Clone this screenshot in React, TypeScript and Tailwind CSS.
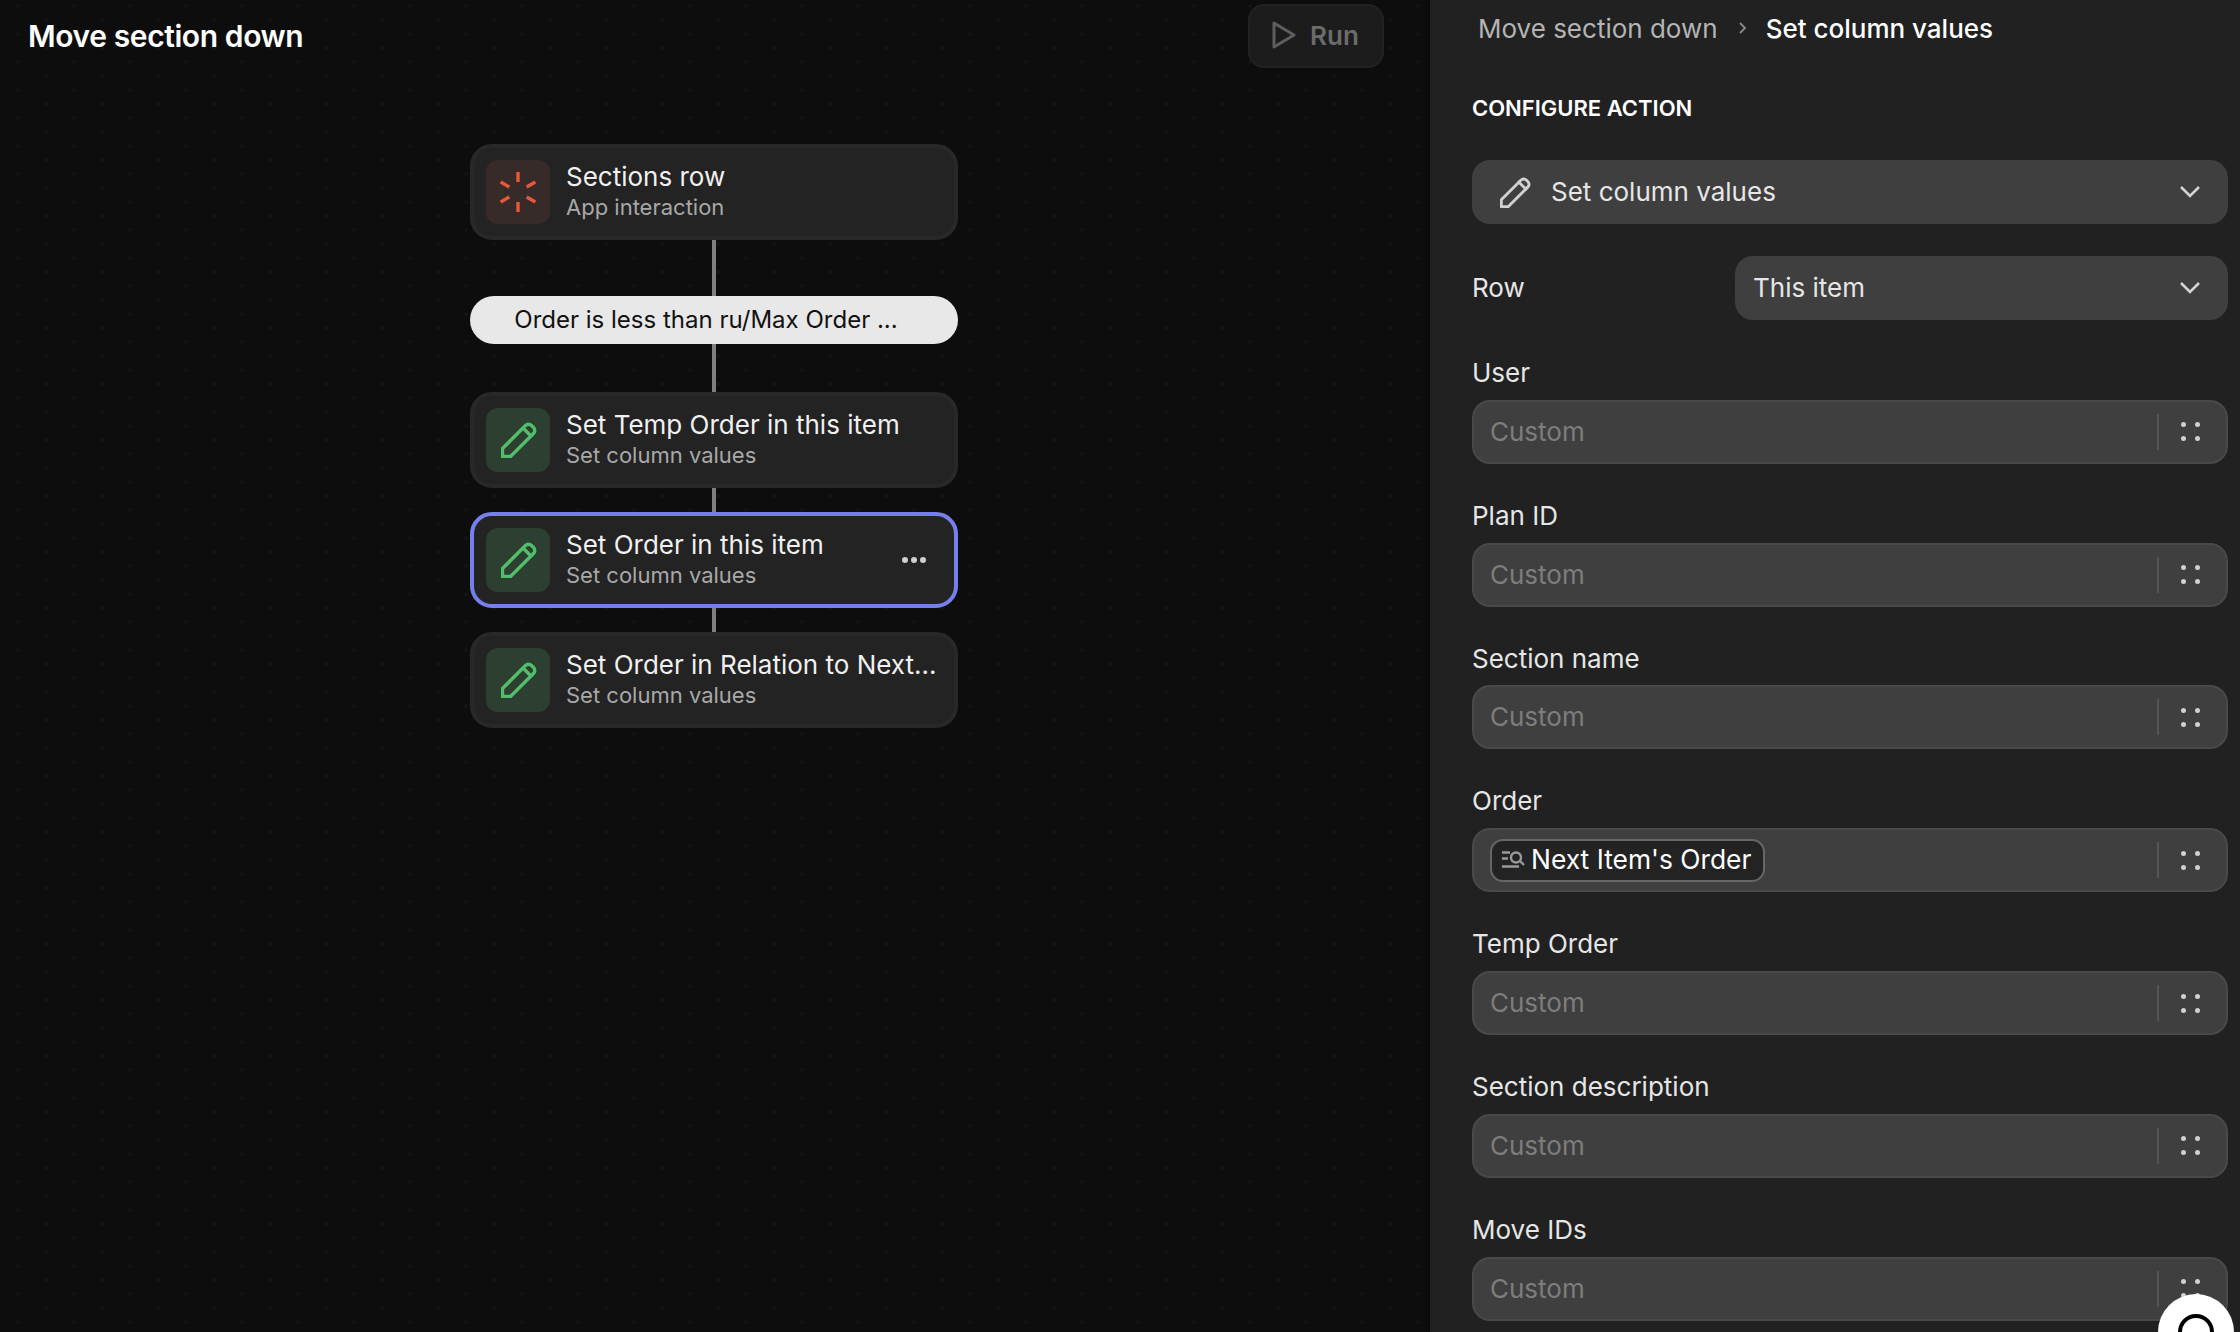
const fields = ['User', 'Plan ID', 'Section name', 'Order', 'Temp Order', 'Section description', 'Move IDs'];

function PencilIcon({ className }: { className?: string }) {
  return (
    <svg viewBox="0 0 36 36" fill="none" stroke="currentColor" strokeWidth="3.4" strokeLinejoin="round" strokeLinecap="round" className={className}>
      <path d="M1.5 34.5V26.5L24.5 3.5a4.2 4.2 0 0 1 6 0l2 2a4.2 4.2 0 0 1 0 6L9.5 34.5Z" />
      <path d="M22 6l8 8" />
    </svg>
  );
}

function SpinnerIcon() {
  return (
    <svg viewBox="0 0 64 64" className="w-16 h-16" stroke="#e8593a" strokeWidth="3.4">
      {[0, 60, 120, 180, 240, 300].map((a) => (
        <line key={a} x1="32" y1="12" x2="32" y2="22" transform={`rotate(${a} 32 32)`} />
      ))}
    </svg>
  );
}

function ChevronIcon() {
  return (
    <svg viewBox="0 0 20 12" fill="none" stroke="#d4d4d4" strokeWidth="2.6" className="w-5 h-3">
      <path d="M1 1l9 9 9-9" />
    </svg>
  );
}

function DotsGrid() {
  return (
    <div className="grid grid-cols-2 gap-x-[9px] gap-y-[9px]">
      <span className="w-[5px] h-[5px] rounded-full bg-[#d0d0d0]" />
      <span className="w-[5px] h-[5px] rounded-full bg-[#d0d0d0]" />
      <span className="w-[5px] h-[5px] rounded-full bg-[#d0d0d0]" />
      <span className="w-[5px] h-[5px] rounded-full bg-[#d0d0d0]" />
    </div>
  );
}

function Connector({ height }: { height: string }) {
  return <div className={`w-1 bg-[#808080] ml-[242px] ${height}`} />;
}

interface StepProps {
  title: string;
  subtitle: string;
  selected?: boolean;
  trigger?: boolean;
}

function Step({ title, subtitle, selected, trigger }: StepProps) {
  return (
    <div
      className={`h-24 rounded-[22px] bg-[#232323] border-4 flex items-center pl-3 pr-3 ${
        selected ? 'border-[#7680ec]' : 'border-[#282828]'
      }`}
    >
      <div
        className={`w-16 h-16 rounded-xl shrink-0 flex items-center justify-center ${
          trigger ? 'bg-[#372b29]' : 'bg-[#2c3f30] text-[#52bd6a]'
        }`}
      >
        {trigger ? <SpinnerIcon /> : <PencilIcon className="w-9 h-9 ml-[2px]" />}
      </div>
      <div className="ml-4 min-w-0 flex-1 pb-[3px]">
        <div className="text-[26px] leading-[32px] text-[#f0f0f0] whitespace-nowrap">{title}</div>
        <div className="text-[22px] leading-[28px] text-[#a8a8a8] whitespace-nowrap">{subtitle}</div>
      </div>
      {selected && (
        <div className="flex gap-[3px] mr-[16px]">
          <span className="w-[6px] h-[6px] rounded-full bg-[#cfcfcf]" />
          <span className="w-[6px] h-[6px] rounded-full bg-[#cfcfcf]" />
          <span className="w-[6px] h-[6px] rounded-full bg-[#cfcfcf]" />
        </div>
      )}
    </div>
  );
}

function Field({ label }: { label: string }) {
  return (
    <div className="h-[142.83px]">
      <div className="h-[42.83px] text-[26px] leading-[32px] text-[#e6e6e6]">{label}</div>
      <div className="h-16 rounded-[18px] bg-[#3f3f3f] border-2 border-[#494949] flex items-center pl-[16px] pr-[26px]">
        <div className="flex-1 min-w-0">
          {label === 'Order' ? (
            <div className="inline-flex items-center h-[43px] w-[275px] rounded-[13px] border-2 border-[#666666] bg-[#232323] pl-[9px] pb-[1px] text-[26.4px] text-white">
              <svg viewBox="0 0 24 20" fill="none" stroke="#9a9a9a" strokeWidth="2.4" className="w-6 h-5 shrink-0 mr-[6px]">
                <path d="M1 2.5h8M1 8.5h6M1 16.5h17" />
                <circle cx="15" cy="7.5" r="5" />
                <path d="M19 11l4 4" />
              </svg>
              Next Item's Order
            </div>
          ) : (
            <span className="text-[26px] text-[#7d7d7d] relative -top-[0.5px]">Custom</span>
          )}
        </div>
        <div className="w-[2px] h-9 bg-[#555555] mr-[22px]" />
        <DotsGrid />
      </div>
    </div>
  );
}

export default function App() {
  return (
    <div className="w-[2240px] h-[1332px] overflow-hidden flex relative bg-[#0d0d0d] font-['Inter',sans-serif]">
      <div className="w-[1430px] shrink-0 border-r-2 border-[#0a0a0a] bg-[#0d0d0d] bg-[radial-gradient(circle,#141414_1.5px,transparent_2px),radial-gradient(circle,#141414_1.5px,transparent_2px)] bg-[length:56px_28px] bg-[position:18px_6px,-10px_-8px]">
        <div className="h-16 mt-1 flex items-center justify-between pl-[28px] pr-[44px]">
          <h1 className="text-[30px] font-semibold tracking-[-0.4px] text-white">Move section down</h1>
          <button className="w-[136px] h-16 rounded-2xl bg-[#1c1c1c] border-2 border-[#222222] flex items-center pl-[22px] pb-[2px] text-[26px] font-semibold text-[#6b6b6b]">
            <svg viewBox="0 0 24 28" fill="none" stroke="#5e5e5e" strokeWidth="3" strokeLinejoin="round" className="w-6 h-7 mr-[14px]">
              <path d="M2 2l20 12L2 26Z" />
            </svg>
            Run
          </button>
        </div>
        <div className="w-[488px] ml-[470px] mt-[76px]">
          <Step trigger title="Sections row" subtitle="App interaction" />
          <Connector height="h-14" />
          <div className="h-12 rounded-full bg-[#e8e8e8] flex items-center justify-center pr-4 text-[24px] text-[#111111]">
            Order is less than ru/Max Order ...
          </div>
          <Connector height="h-12" />
          <Step title="Set Temp Order in this item" subtitle="Set column values" />
          <Connector height="h-6" />
          <Step selected title="Set Order in this item" subtitle="Set column values" />
          <Connector height="h-6" />
          <Step title="Set Order in Relation to Next..." subtitle="Set column values" />
        </div>
      </div>

      <div className="flex-1 bg-[#212121] pl-[42px] pr-3">
        <div className="h-[58px] pb-[2px] flex items-center pl-[6px] text-[26px]">
          <span className="text-[#b4b4b4]">Move section down</span>
          <svg viewBox="0 0 10 14" fill="none" stroke="#8a8a8a" strokeWidth="1.8" className="w-[10px] h-[14px] ml-[20px] mr-[18px]">
            <path d="M2 2l5 5-5 5" />
          </svg>
          <span className="text-white font-medium">Set column values</span>
        </div>
        <h2 className="mt-[32px] h-9 leading-9 text-[22px] font-semibold text-white">CONFIGURE ACTION</h2>
        <div className="mt-[34px] h-16 rounded-[18px] bg-[#3f3f3f] flex items-center pl-7 pr-7">
          <PencilIcon className="w-[31px] h-[31px] text-[#d0d0d0]" />
          <span className="ml-[20px] pb-[1px] flex-1 text-[26px] text-[#e6e6e6]">Set column values</span>
          <ChevronIcon />
        </div>
        <div className="mt-8 flex items-center">
          <span className="w-[263px] pb-[2px] text-[26px] text-[#e6e6e6]">Row</span>
          <div className="flex-1 h-16 rounded-[18px] bg-[#3f3f3f] flex items-center pl-[18px] pr-7">
            <span className="flex-1 pb-[2px] text-[26px] text-[#e6e6e6]">This item</span>
            <ChevronIcon />
          </div>
        </div>
        <div className="mt-[37px]">
          {fields.map((f) => (
            <Field key={f} label={f} />
          ))}
        </div>
      </div>

      {/* chat bubble sits over the panel */}
      <div className="absolute left-[2158px] top-[1294px] w-[76px] h-[76px] rounded-full bg-white flex items-center justify-center">
        <div className="w-9 h-9 rounded-full border-4 border-black" />
      </div>
    </div>
  );
}
